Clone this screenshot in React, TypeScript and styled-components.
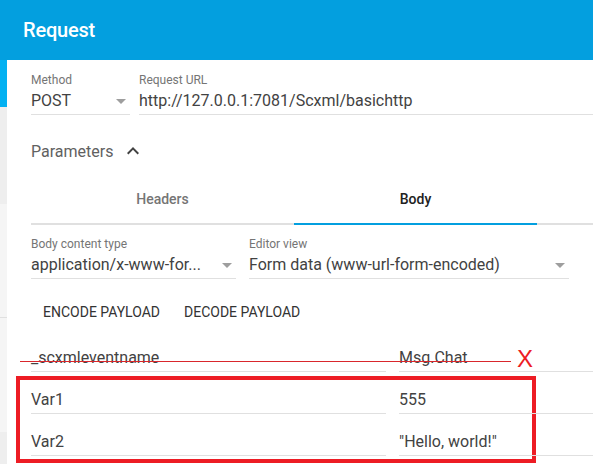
import React from 'react';
import styled, { createGlobalStyle } from 'styled-components';

const GlobalStyle = createGlobalStyle`
	html, body {
		margin: 0;
		padding: 0;
		background: #ffffff;
	}
	body {
		font-family: Roboto, 'Liberation Sans', Arial, sans-serif;
		-webkit-font-smoothing: antialiased;
	}
`;

const Page = styled.div`
	width: 593px;
	height: 464px;
	overflow: hidden;
	display: flex;
	flex-direction: column;
`;

const Header = styled.header`
	height: 60px;
	flex: none;
	background: #039fdf;
	color: #ffffff;
	display: flex;
	align-items: center;
	padding-left: 23px;
	font-size: 20px;
	font-weight: 500;
	letter-spacing: -0.2px;
`;

const Main = styled.div`
	flex: 1;
	display: flex;
	min-height: 0;
`;

const Strip = styled.div`
	width: 7px;
	flex: none;
	display: flex;
	flex-direction: column;
`;

const StripPart = styled.div<{ $h: number; $bg: string; $line?: boolean }>`
	height: ${(p) => p.$h}px;
	flex: none;
	background: ${(p) => p.$bg};
	border-top: ${(p) => (p.$line ? '1px solid #e0e0e0' : 'none')};
`;

const Panel = styled.div`
	flex: 1;
	min-width: 0;
	background: #ffffff;
	padding: 12px 0 0 24px;
	display: flex;
	flex-direction: column;
`;

const FieldRow = styled.div<{ $gap: number }>`
	display: flex;
	gap: ${(p) => p.$gap}px;
`;

const Field = styled.div<{ $w?: number }>`
	${(p) => (p.$w ? `width: ${p.$w}px; flex: none;` : 'flex: 1; min-width: 0;')}
	display: flex;
	flex-direction: column;
`;

const Label = styled.div`
	font-size: 12px;
	line-height: 16px;
	color: #757575;
`;

const Value = styled.div`
	position: relative;
	height: 26px;
	line-height: 26px;
	font-size: 16px;
	color: #424242;
	border-bottom: 1px solid #e0e0e0;
	white-space: nowrap;
	overflow: visible;
`;

const Caret = styled.span`
	position: absolute;
	right: 4px;
	top: 11px;
	width: 0;
	height: 0;
	border-left: 5px solid transparent;
	border-right: 5px solid transparent;
	border-top: 5px solid #9e9e9e;
`;

const Section = styled.div`
	margin-top: 24px;
	display: flex;
	align-items: center;
	height: 24px;
	font-size: 16px;
	color: #616161;
	gap: 8px;
`;

const Tabs = styled.div`
	margin-top: 12px;
	display: flex;
	border-bottom: 2px solid #e0e0e0;
`;

const Tab = styled.div<{ $w: number; $active?: boolean }>`
	width: ${(p) => p.$w}px;
	flex: none;
	height: 48px;
	display: flex;
	align-items: center;
	justify-content: center;
	font-size: 14px;
	font-weight: 500;
	color: ${(p) => (p.$active ? '#212121' : '#757575')};
	box-shadow: ${(p) => (p.$active ? 'inset 0 -2px 0 #039fdf' : 'none')};
	margin-bottom: -2px;
	padding-bottom: 2px;
	box-sizing: content-box;
`;

const BodyFields = styled(FieldRow)`
	margin-top: 11px;
`;

const Actions = styled.div`
	margin-top: 15px;
	display: flex;
`;

const Button = styled.div`
	height: 36px;
	padding: 0 12px;
	display: flex;
	align-items: center;
	font-size: 14px;
	text-transform: uppercase;
	color: #333333;
`;

const ParamRow = styled.div<{ $struck?: boolean }>`
	position: relative;
	display: flex;
	gap: 13px;
	margin-top: 15px;
	${(p) =>
		p.$struck &&
		`&::after {
			content: '';
			position: absolute;
			left: -11px;
			width: 491px;
			top: 16px;
			height: 1px;
			background: #d9262c;
		}`}
`;

const KeyInput = styled(Value)`
	width: 355px;
	flex: none;
`;

const ValueInput = styled(Value)`
	flex: 1;
	min-width: 0;
`;

const RemoveMark = styled.span`
	position: absolute;
	left: 486px;
	top: 1px;
	line-height: 26px;
	font-size: 24px;
	color: #ed1c24;
	font-family: 'Liberation Sans', Arial, sans-serif;
`;

const Highlight = styled.div`
	position: relative;
	&::before {
		content: '';
		position: absolute;
		left: -15px;
		top: 4px;
		width: 520px;
		bottom: -7px;
		border: 4px solid #ed1c24;
		box-sizing: border-box;
		pointer-events: none;
	}
`;

const ChevronUp = () => (
	<svg width="24" height="24" viewBox="0 0 24 24" fill="#424242">
		<path d="M7.41 15.41L12 10.83l4.59 4.58L18 14l-6-6-6 6z" />
	</svg>
);

type Param = { name: string; value: string };

const params: Param[] = [
	{ name: 'Var1', value: '555' },
	{ name: 'Var2', value: '"Hello, world!"' },
];

export default function App() {
	return (
		<Page>
			<GlobalStyle />
			<Header>Request</Header>
			<Main>
				<Strip>
					<StripPart $h={47} $bg="#03b1f2" />
					<StripPart $h={97} $bg="#eeeeee" />
					<StripPart $h={113} $bg="#f5f5f5" />
					<StripPart $h={114} $bg="#f5f5f5" $line />
					<StripPart $h={40} $bg="#eeeeee" />
				</Strip>
				<Panel>
					<FieldRow $gap={9}>
						<Field $w={99}>
							<Label>Method</Label>
							<Value>
								POST
								<Caret />
							</Value>
						</Field>
						<Field>
							<Label>Request URL</Label>
							<Value>http://127.0.0.1:7081/Scxml/basichttp</Value>
						</Field>
					</FieldRow>

					<Section>
						Parameters
						<ChevronUp />
					</Section>

					<Tabs>
						<Tab $w={263}>Headers</Tab>
						<Tab $w={243} $active>
							Body
						</Tab>
					</Tabs>

					<BodyFields $gap={13}>
						<Field $w={205}>
							<Label>Body content type</Label>
							<Value>
								application/x-www-for...
								<Caret />
							</Value>
						</Field>
						<Field $w={320}>
							<Label>Editor view</Label>
							<Value>
								Form data (www-url-form-encoded)
								<Caret />
							</Value>
						</Field>
					</BodyFields>

					<Actions>
						<Button>Encode payload</Button>
						<Button>Decode payload</Button>
					</Actions>

					<ParamRow $struck>
						<KeyInput>_scxmleventname</KeyInput>
						<ValueInput>Msg.Chat</ValueInput>
						<RemoveMark>X</RemoveMark>
					</ParamRow>

					<Highlight>
						{params.map((p) => (
							<ParamRow key={p.name}>
								<KeyInput>{p.name}</KeyInput>
								<ValueInput>{p.value}</ValueInput>
							</ParamRow>
						))}
					</Highlight>
				</Panel>
			</Main>
		</Page>
	);
}
